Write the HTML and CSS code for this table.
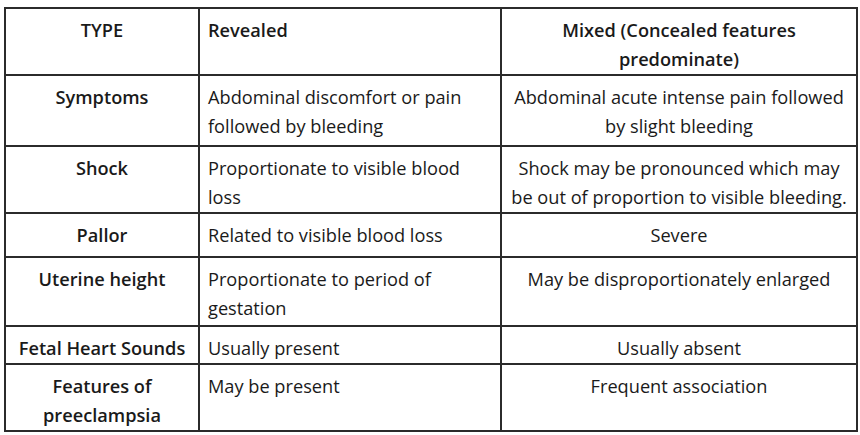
FILE: index.html
```html
<!DOCTYPE html>
<html>
<head>
<meta charset="utf-8">
<link rel="stylesheet" href="styles.css">
</head>
<body>
<table class="cmp">
  <colgroup>
    <col class="c1"><col class="c2"><col class="c3">
  </colgroup>
  <tr class="r-head">
    <th class="lab">TYPE</th>
    <th class="rev">Revealed</th>
    <th class="mix">Mixed (Concealed features<br>predominate)</th>
  </tr>
  <tr class="r-sym">
    <td class="lab">Symptoms</td>
    <td class="rev">Abdominal discomfort or pain<br>followed by bleeding</td>
    <td class="mix">Abdominal acute intense pain followed<br>by slight bleeding</td>
  </tr>
  <tr class="r-shock">
    <td class="lab">Shock</td>
    <td class="rev">Proportionate to visible blood<br>loss</td>
    <td class="mix">Shock may be pronounced which may<br>be out of proportion to visible bleeding.</td>
  </tr>
  <tr class="r-pallor">
    <td class="lab">Pallor</td>
    <td class="rev">Related to visible blood loss</td>
    <td class="mix">Severe</td>
  </tr>
  <tr class="r-ut">
    <td class="lab">Uterine height</td>
    <td class="rev">Proportionate to period of<br>gestation</td>
    <td class="mix">May be disproportionately enlarged</td>
  </tr>
  <tr class="r-fetal">
    <td class="lab">Fetal Heart Sounds</td>
    <td class="rev">Usually present</td>
    <td class="mix">Usually absent</td>
  </tr>
  <tr class="r-feat">
    <td class="lab">Features of<br>preeclampsia</td>
    <td class="rev">May be present</td>
    <td class="mix">Frequent association</td>
  </tr>
</table>
</body>
</html>
```

FILE: styles.css
```css
html, body {
  background: #ffffff;
}
body {
  margin: 0;
  padding: 7px 4px 0 4px;
  font-family: "Open Sans", "Noto Sans", sans-serif;
  font-size: 18.2px;
  color: #1a1a1a;
}
.cmp {
  border-collapse: collapse;
  width: 852px;
  table-layout: fixed;
}
.c1 { width: 194px; }
.c2 { width: 302px; }
.c3 { width: 356px; }
.cmp th, .cmp td {
  border: 2px solid #2b2b2b;
  vertical-align: top;
  line-height: 29px;
  padding: 7px 8px 0 8px;
  white-space: nowrap;
}
.cmp th { font-weight: 600; }
.lab { font-weight: 600; text-align: center; }
.rev { text-align: left; }
.mix { text-align: center; padding-left: 1px; padding-right: 1px; }
.r-head { height: 67px; }
.r-sym { height: 71px; }
.r-shock { height: 66px; }
.r-pallor { height: 44px; }
.r-ut { height: 69px; }
.r-fetal { height: 38px; }
.r-feat { height: 67px; }
```
